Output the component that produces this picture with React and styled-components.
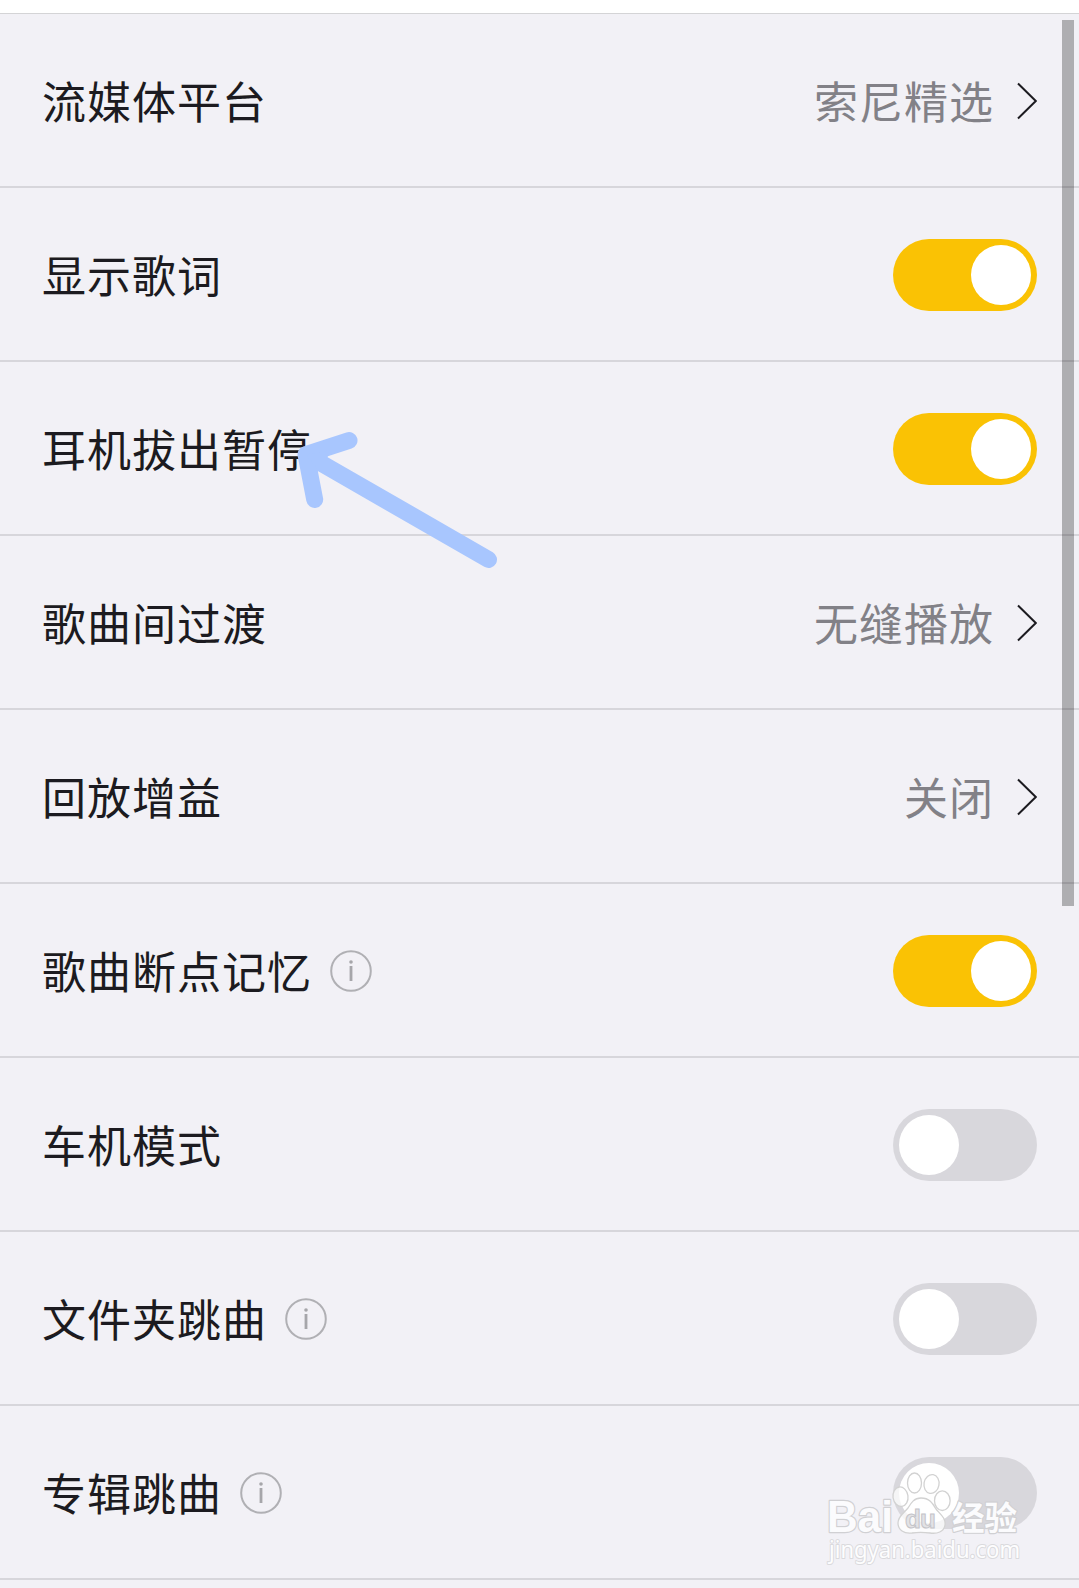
import styled, { createGlobalStyle } from 'styled-components';

const rows = [
    { label: '流媒体平台', value: '索尼精选' },
    { label: '显示歌词', on: true },
    { label: '耳机拔出暂停', on: true },
    { label: '歌曲间过渡', value: '无缝播放' },
    { label: '回放增益', value: '关闭' },
    { label: '歌曲断点记忆', info: true, on: true },
    { label: '车机模式', on: false },
    { label: '文件夹跳曲', info: true, on: false },
    { label: '专辑跳曲', info: true, on: false },
];

const InfoIcon = () => (
    <svg width="42" height="42" viewBox="0 0 42 42" fill="none">
        <circle cx="21" cy="21" r="19.8" stroke="#b0b0b4" strokeWidth="2" />
        <circle cx="21" cy="12" r="1.8" fill="#a6a6aa" />
        <path d="M21 16V31" stroke="#a6a6aa" strokeWidth="2.8" />
    </svg>
);

const Chevron = () => (
    <svg width="20" height="38" viewBox="0 0 20 38" fill="none">
        <path d="M1 1.5L18.8 19L1 36.5" stroke="#1c1b20" strokeWidth="2" />
    </svg>
);

const SettingRow = ({ item }) => {

    const { label, value, info, on } = item;

    return (
        <Row>
            <Label>{label}</Label>
            {info && <InfoIcon />}
            <Side>
                {value ? (
                    <>
                        <Value>{value}</Value>
                        <Chevron />
                    </>
                ) : (
                    <Toggle $on={on}><Knob /></Toggle>
                )}
            </Side>
        </Row>
    );
}

const Arrow = () => (
    <ArrowSvg width="210" height="150" viewBox="290 425 210 150" fill="none">
        <path
            d="M488.5 559.5L306 454.5M349 440.5L306 454.5L314.7 499.5"
            stroke="#a8c6fe"
            strokeWidth="17"
            strokeLinecap="round"
            strokeLinejoin="round"
        />
        <path d="M306 454.5L331 450L320 472Z" fill="#a8c6fe" />
    </ArrowSvg>
);

const Watermark = () => (
    <WatermarkSvg width="210" height="112" viewBox="820 1465 210 112">
        <g fill="#fff" fillOpacity="0.75" stroke="#d2d2d2" strokeWidth="1.3">
            <ellipse cx="900.5" cy="1496.7" rx="7.5" ry="9.8" transform="rotate(-8 900.5 1496.7)" />
            <ellipse cx="914.5" cy="1483" rx="7" ry="10" />
            <ellipse cx="931.5" cy="1484" rx="7.5" ry="9.5" transform="rotate(10 931.5 1484)" />
            <ellipse cx="942.3" cy="1500.7" rx="7.8" ry="9.8" />
            <path d="M921 1498C930 1498 933 1504 936 1509C940 1514 946 1518 945 1525C944 1532 937 1534 930 1533C923 1532 918 1532 912 1533C904 1534 898 1530 898 1523C898 1516 904 1513 908 1508C911 1503 914 1498 921 1498Z" />
        </g>
        <Brand x="827" y="1532" fontSize="44" textLength="66" lengthAdjust="spacingAndGlyphs">Bai</Brand>
        <Brand x="952" y="1530" fontSize="33" textLength="65" lengthAdjust="spacingAndGlyphs">经验</Brand>
        <Domain x="829" y="1558" fontSize="23" textLength="191" lengthAdjust="spacingAndGlyphs">jingyan.baidu.com</Domain>
        <DuText x="905" y="1527.5" fontSize="26" textLength="31">du</DuText>
    </WatermarkSvg>
);

const App = () => {
    return (
        <Page>
            <GlobalStyle />
            <TopBar />
            {rows.map(item => <SettingRow key={item.label} item={item} />)}
            <ScrollThumb />
            <Arrow />
            <Watermark />
        </Page>
    );
}

const GlobalStyle = createGlobalStyle`
  body {
    margin: 0;
    background: #f2f1f6;
  }

  * {
    box-sizing: border-box;
  }
`;

const Page = styled.div`
  position: relative;
  width: 1079px;
  height: 1588px;
  overflow: hidden;
  background: #f2f1f6;
  font-family: 'Noto Sans CJK SC', sans-serif;
`;

const TopBar = styled.div`
  height: 14px;
  background: #fff;
  border-bottom: 1px solid #d4d4d6;
`;

const Row = styled.div`
  display: flex;
  align-items: center;
  height: 174px;
  padding: 2px 42px 0 42px;
  border-bottom: 2px solid #d7d6db;
`;

const Label = styled.span`
  margin-right: 18px;
  padding-bottom: 2px;
  font-size: 44px;
  line-height: 60px;
  letter-spacing: 1px;
  color: #1c1b20;
`;

const Side = styled.div`
  display: flex;
  align-items: center;
  gap: 23px;
  margin-left: auto;
`;

const Value = styled.span`
  padding-bottom: 2px;
  font-size: 44px;
  line-height: 60px;
  letter-spacing: 1px;
  color: #828187;
`;

const Toggle = styled.div`
  display: flex;
  align-items: center;
  justify-content: ${({ $on }) => ($on ? 'flex-end' : 'flex-start')};
  width: 144px;
  height: 72px;
  padding: 6px;
  border-radius: 36px;
  background: ${({ $on }) => ($on ? '#fac204' : '#d8d7dc')};
`;

const Knob = styled.div`
  width: 60px;
  height: 60px;
  border-radius: 50%;
  background: #fff;
`;

const ScrollThumb = styled.div`
  position: absolute;
  top: 20px;
  right: 5px;
  width: 12px;
  height: 886px;
  background: rgba(0, 0, 0, 0.28);
`;

const ArrowSvg = styled.svg`
  position: absolute;
  left: 290px;
  top: 425px;
`;

const WatermarkSvg = styled.svg`
  position: absolute;
  left: 820px;
  top: 1465px;
`;

const Brand = styled.text`
  font-family: 'Liberation Sans', 'Noto Sans CJK SC', sans-serif;
  font-weight: bold;
  fill: #fbfbfd;
  stroke: #d0d0d3;
  stroke-width: 2.4px;
  stroke-linejoin: round;
  paint-order: stroke;
`;

const Domain = styled.text`
  font-family: 'Noto Sans', sans-serif;
  fill: #fdfdfe;
  stroke: #dadadd;
  stroke-width: 2px;
  stroke-linejoin: round;
  paint-order: stroke;
`;

const DuText = styled.text`
  font-family: 'Liberation Sans', sans-serif;
  font-weight: bold;
  fill: #e2e2e5;
  stroke: #c4c4c8;
  stroke-width: 1px;
`;

export default App;
